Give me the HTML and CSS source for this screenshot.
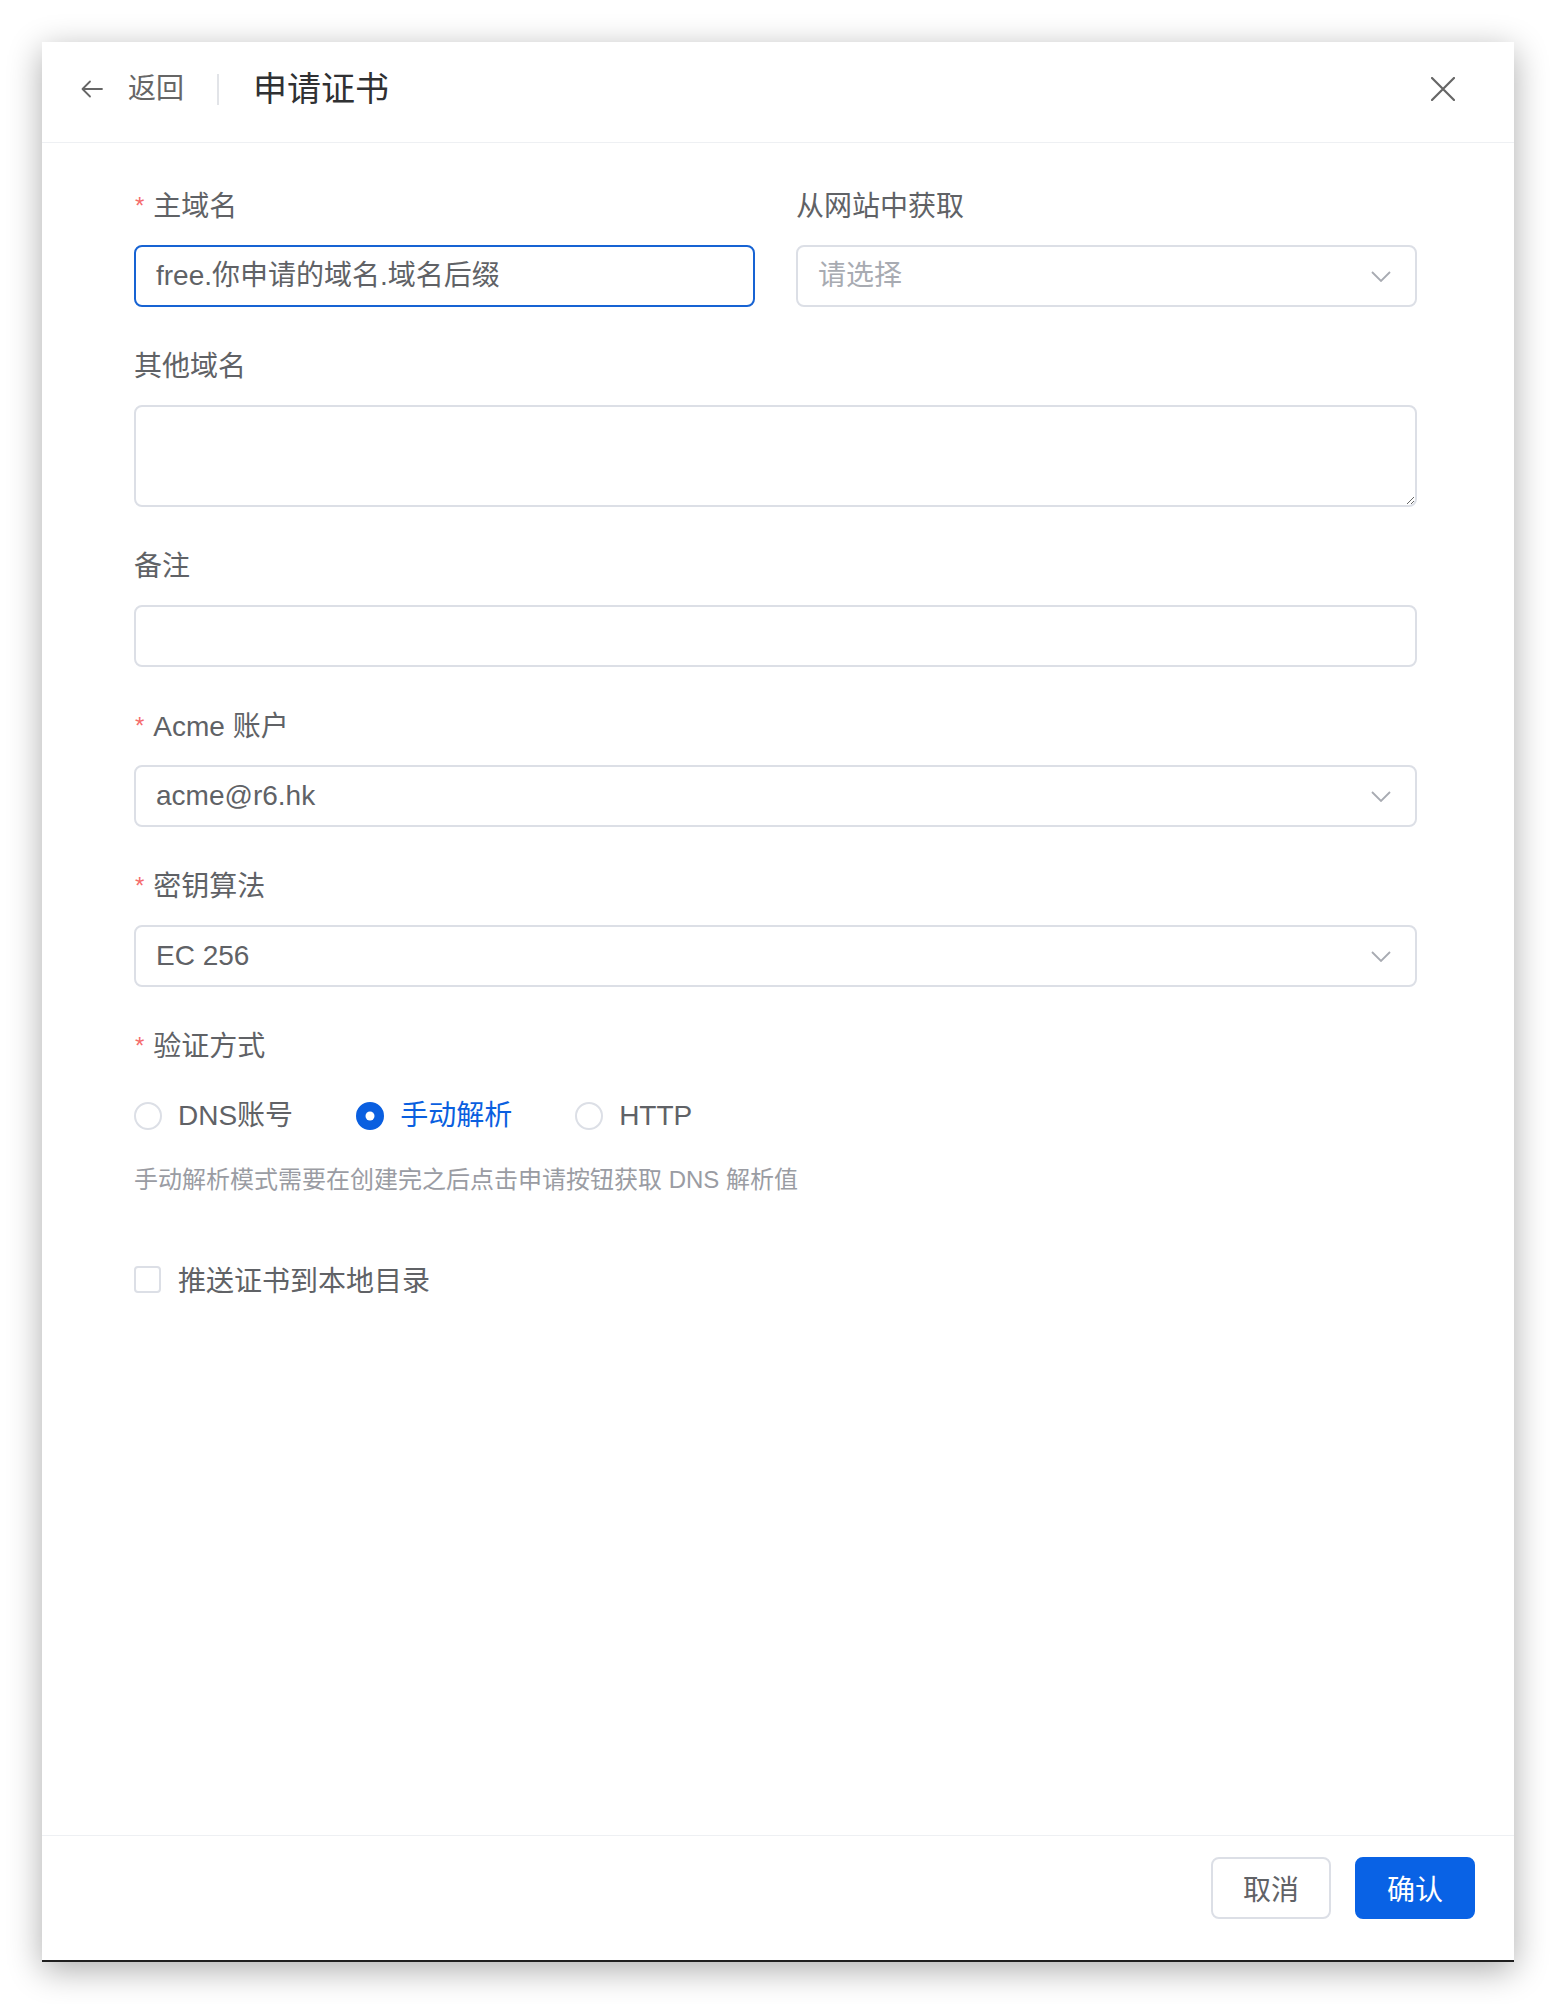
FILE: index.html
```html
<!DOCTYPE html>
<html lang="zh-CN">
<head>
<meta charset="utf-8">
<title>申请证书</title>
<link rel="stylesheet" href="styles.css">
</head>
<body>
<div class="dialog">
  <header class="dialog-header">
    <button class="back" type="button">
      <svg class="back-icon" viewBox="0 0 24 24" width="24" height="24"><path d="M22 12H3M10 4.5L2.5 12 10 19.5" fill="none" stroke="#666" stroke-width="1.8" stroke-linecap="round" stroke-linejoin="round"/></svg>
      <span class="back-text">返回</span>
    </button>
    <span class="header-sep"></span>
    <h1 class="title">申请证书</h1>
    <button class="close" type="button" aria-label="关闭">
      <svg viewBox="0 0 24 24" width="24" height="24"><path d="M1 1L23 23M23 1L1 23" fill="none" stroke="#666" stroke-width="2.2" stroke-linecap="round"/></svg>
    </button>
  </header>

  <main class="dialog-body">
    <div class="row">
      <div class="field">
        <div class="label"><span class="req">*</span>主域名</div>
        <div class="input focused">free.你申请的域名.域名后缀</div>
      </div>
      <div class="field">
        <div class="label">从网站中获取</div>
        <div class="input select"><span class="placeholder">请选择</span><svg class="chev" viewBox="0 0 20 11" width="20" height="11"><path d="M1 1L10 10 19 1" fill="none" stroke="#a8abb2" stroke-width="1.8"/></svg></div>
      </div>
    </div>

    <div class="field">
      <div class="label">其他域名</div>
      <textarea class="textarea"></textarea>
    </div>

    <div class="field">
      <div class="label">备注</div>
      <div class="input"></div>
    </div>

    <div class="field">
      <div class="label"><span class="req">*</span>Acme 账户</div>
      <div class="input select"><span>acme@r6.hk</span><svg class="chev" viewBox="0 0 20 11" width="20" height="11"><path d="M1 1L10 10 19 1" fill="none" stroke="#a8abb2" stroke-width="1.8"/></svg></div>
    </div>

    <div class="field">
      <div class="label"><span class="req">*</span>密钥算法</div>
      <div class="input select"><span>EC 256</span><svg class="chev" viewBox="0 0 20 11" width="20" height="11"><path d="M1 1L10 10 19 1" fill="none" stroke="#a8abb2" stroke-width="1.8"/></svg></div>
    </div>

    <div class="field field-last">
      <div class="label"><span class="req">*</span>验证方式</div>
      <div class="radios">
        <label class="radio"><span class="radio-dot"></span><span>DNS账号</span></label>
        <label class="radio checked"><span class="radio-dot"></span><span>手动解析</span></label>
        <label class="radio"><span class="radio-dot"></span><span>HTTP</span></label>
      </div>
      <div class="help">手动解析模式需要在创建完之后点击申请按钮获取 DNS 解析值</div>
    </div>

    <label class="checkbox"><span class="box"></span><span>推送证书到本地目录</span></label>
  </main>

  <footer class="dialog-footer">
    <button class="btn" type="button">取消</button>
    <button class="btn primary" type="button">确认</button>
  </footer>
</div>
</body>
</html>
```

FILE: styles.css
```css
* { box-sizing: border-box; }

html, body {
  margin: 0;
  padding: 0;
  background: #ffffff;
}

body {
  font-family: "Liberation Sans", "Noto Sans CJK SC", sans-serif;
  color: #606266;
  padding: 42px 0 0 42px;
  height: 2004px;
}

.dialog {
  width: 1472px;
  height: 1920px;
  background: #ffffff;
  border-bottom: 2px solid #1f1f1f;
  box-shadow: 0 8px 32px rgba(0, 0, 0, 0.33);
  display: flex;
  flex-direction: column;
}

/* header */
.dialog-header {
  height: 101px;
  flex: none;
  border-bottom: 1px solid #eef0f3;
  display: flex;
  align-items: center;
  padding: 0 59px 6px 38px;
}

.back {
  display: flex;
  align-items: center;
  gap: 24px;
  border: 0;
  background: none;
  padding: 0;
  font: inherit;
  cursor: pointer;
}

.back-icon { display: block; }

.back-text {
  font-size: 28px;
  color: #666;
  line-height: 40px;
}

.header-sep {
  width: 2px;
  height: 31px;
  background: #e2e4e8;
  margin: 0 34px 0 33px;
}

.title {
  margin: 0;
  font-size: 34px;
  font-weight: 400;
  color: #303133;
  flex: 1;
  line-height: 44px;
}

.close {
  border: 0;
  background: none;
  padding: 0;
  display: block;
  cursor: pointer;
}
.close svg { display: block; }

/* body */
.dialog-body {
  flex: 1;
  padding: 44px 97px 0 92px;
}

.row {
  display: grid;
  grid-template-columns: 1fr 1fr;
  column-gap: 41px;
}

.field { margin-bottom: 40px; }
.field-last { margin-bottom: 0; }

.label {
  height: 40px;
  line-height: 40px;
  font-size: 28px;
  color: #606266;
  margin-bottom: 18px;
  white-space: nowrap;
}

.req {
  color: #f56c6c;
  font-size: 24px;
  margin-right: 9px;
  margin-left: 1px;
  position: relative;
  top: -2px;
}

.input {
  height: 62px;
  border: 2px solid #dcdfe6;
  border-radius: 8px;
  padding: 0 24px 0 20px;
  font-size: 28px;
  line-height: 58px;
  color: #606266;
  display: flex;
  align-items: center;
  white-space: nowrap;
}

.input.focused { border-color: #1763d3; }

.select { justify-content: space-between; }
.placeholder { color: #a8abb2; }
.chev { display: block; flex: none; }

.textarea {
  display: block;
  width: 100%;
  height: 102px;
  border: 2px solid #dcdfe6;
  border-radius: 8px;
  resize: vertical;
  font: inherit;
  font-size: 28px;
  padding: 10px 20px;
  outline: none;
  background: #fff;
}

/* radios */
.radios {
  height: 62px;
  display: flex;
  align-items: center;
  gap: 63px;
}

.radio {
  display: flex;
  align-items: center;
  gap: 16px;
  font-size: 28px;
  color: #606266;
  line-height: 40px;
}

.radio-dot {
  width: 28px;
  height: 28px;
  border-radius: 50%;
  border: 2px solid #dcdfe6;
  background: #fff;
  position: relative;
  flex: none;
}

.radio.checked { color: #0a5fe0; }
.radio.checked .radio-dot {
  border-color: #0a5fe0;
  background: #0a5fe0;
}
.radio.checked .radio-dot::after {
  content: "";
  position: absolute;
  width: 9px;
  height: 9px;
  border-radius: 50%;
  background: #fff;
  left: 50%;
  top: 50%;
  transform: translate(-50%, -50%);
}

.help {
  margin-top: 16px;
  font-size: 24px;
  line-height: 34px;
  color: #9a9ca3;
}

/* checkbox */
.checkbox {
  margin-top: 62px;
  display: flex;
  align-items: center;
  gap: 17px;
  height: 40px;
  font-size: 28px;
  color: #606266;
}

.box {
  width: 27px;
  height: 27px;
  border: 2px solid #dcdfe6;
  border-radius: 4px;
  background: #fff;
  flex: none;
}

/* footer */
.dialog-footer {
  flex: none;
  border-top: 1px solid #eef0f3;
  padding: 21px 39px 41px 0;
  display: flex;
  justify-content: flex-end;
  gap: 24px;
}

.btn {
  height: 62px;
  width: 120px;
  border: 2px solid #dcdfe6;
  border-radius: 8px;
  background: #fff;
  font-family: inherit;
  font-size: 28px;
  color: #606266;
  padding: 0;
  cursor: pointer;
}

.btn.primary {
  background: #0962e5;
  border-color: #0962e5;
  color: #fff;
}
```
